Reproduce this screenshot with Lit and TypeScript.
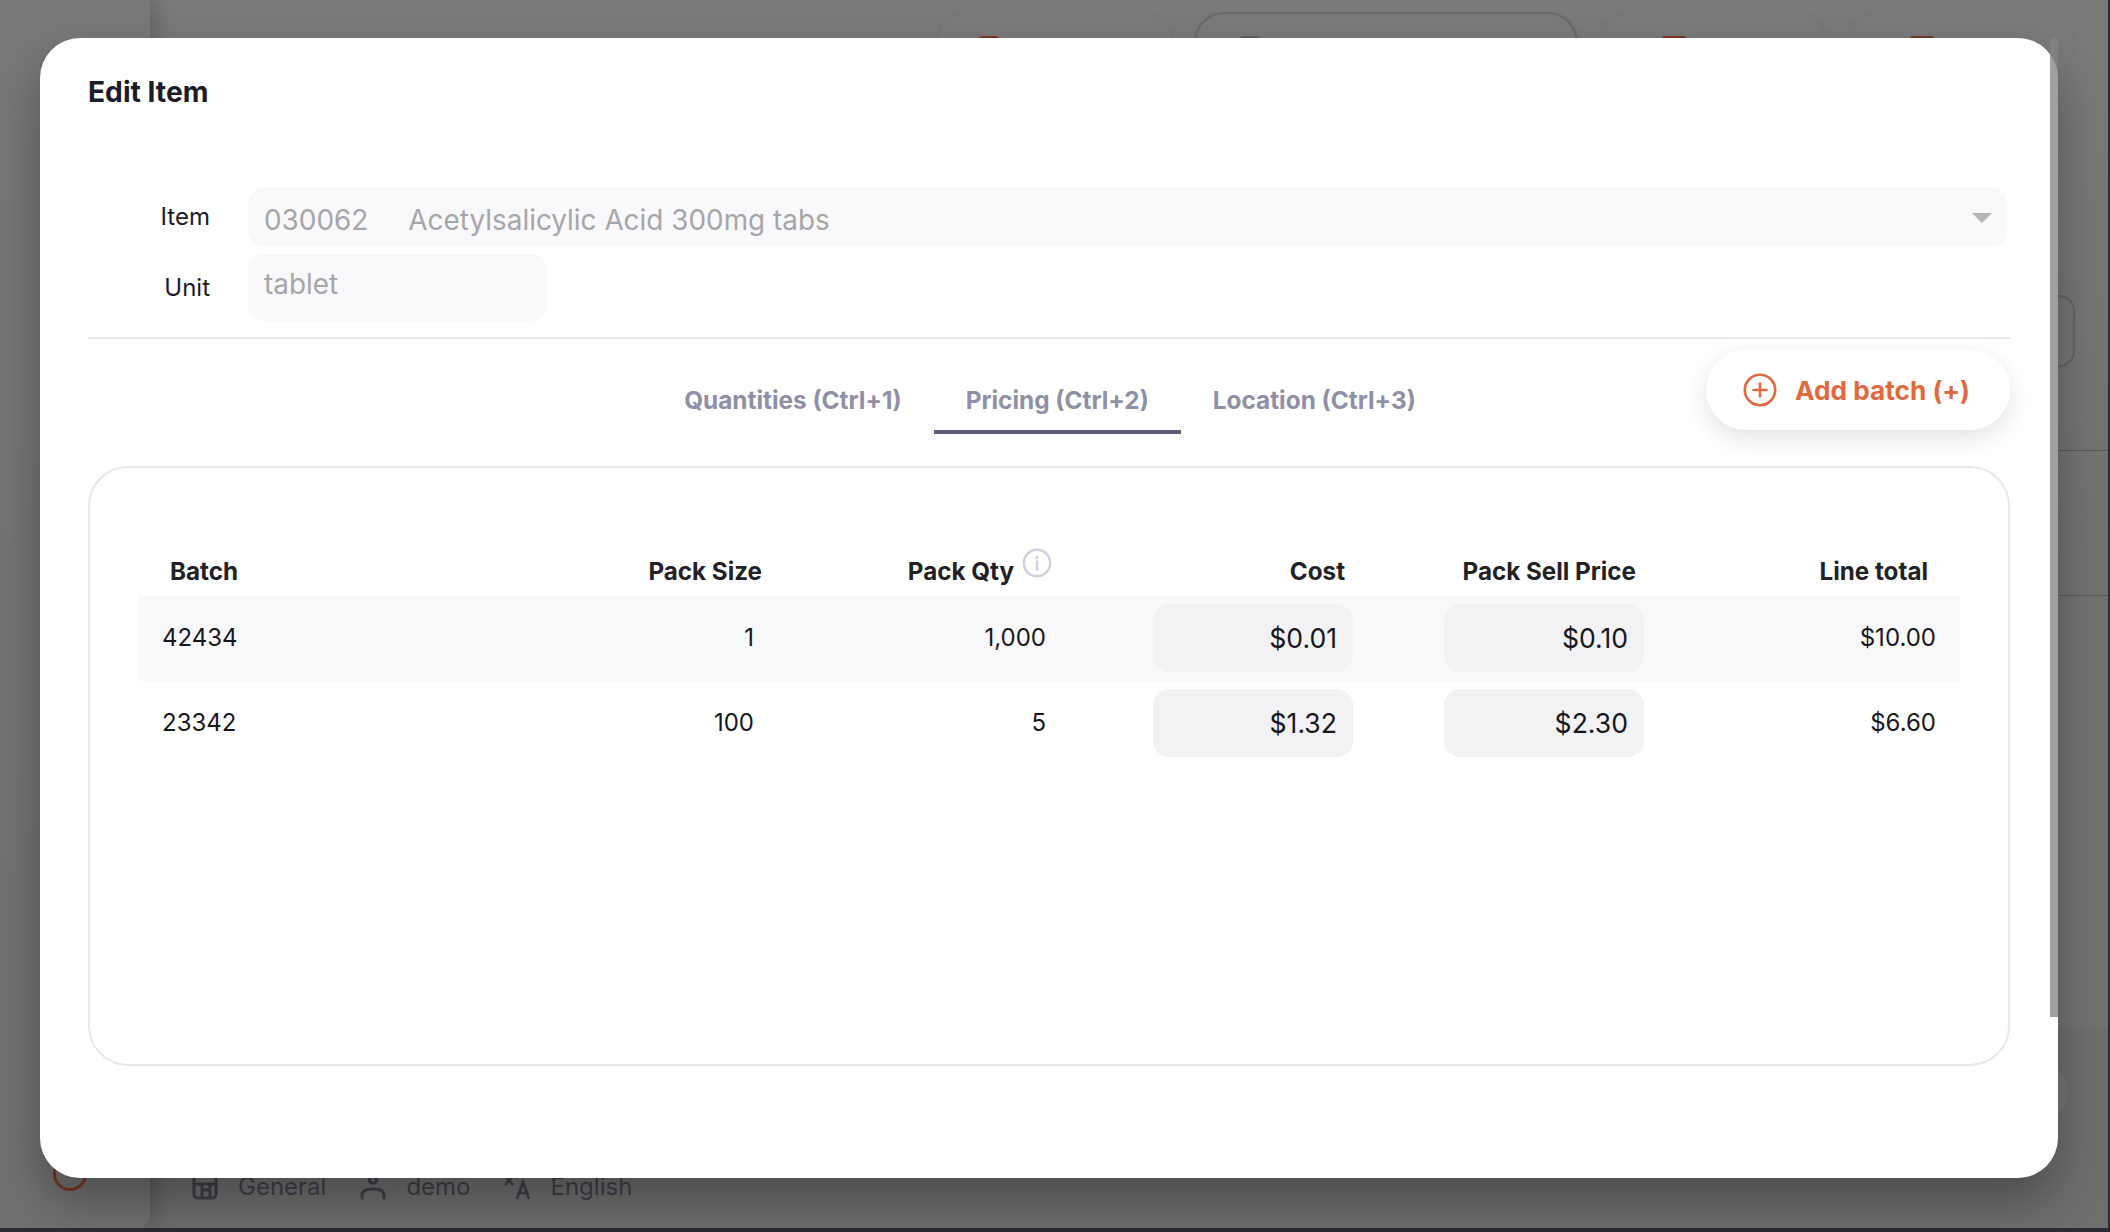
import { LitElement, html, css, svg } from "lit";
import { customElement } from "lit/decorators.js";

const plusIcon = svg`<circle cx="17" cy="17" r="15.2" fill="none" stroke="currentColor" stroke-width="2.6"/><path d="M17 10.5v13M10.5 17h13" fill="none" stroke="currentColor" stroke-width="2.6" stroke-linecap="round"/>`;
const infoIcon = svg`<circle cx="15" cy="15" r="13.2" fill="none" stroke="currentColor" stroke-width="2.4"/><circle cx="15" cy="9.4" r="1.6" fill="currentColor"/><path d="M15 13.5v8" fill="none" stroke="currentColor" stroke-width="2.4" stroke-linecap="round"/>`;

interface Row { batch: string; size: string; qty: string; cost: string; sell: string; total: string; }
const rows: Row[] = [
  { batch: "42434", size: "1", qty: "1,000", cost: "$0.01", sell: "$0.10", total: "$10.00" },
  { batch: "23342", size: "100", qty: "5", cost: "$1.32", sell: "$2.30", total: "$6.60" },
];

@customElement("app-root")
export class AppRoot extends LitElement {
  static styles = css`
    :host { display: block; position: relative; width: 2110px; height: 1232px; overflow: hidden;
      background: #2c2c34; font-family: Inter, "Noto Sans", sans-serif; }
    .page { width: 2108px; height: 1228px; position: relative; overflow: hidden;
      background: linear-gradient(180deg, #7a7a7a 0%, #727272 45%, #727272 100%); display: flex; }
    .side { width: 150px; height: 1228px; flex: none; background: linear-gradient(180deg,#787878,#707070);
      border-radius: 0 0 14px 0; box-shadow: 4px 0 22px rgba(0,0,0,.22); position: relative; z-index: 1; }
    .ring { position: absolute; left: 53px; top: 1157px; width: 34px; height: 34px; border-radius: 50%;
      border: 3px solid #7c3620; box-sizing: border-box; }
    .main { flex: 1; display: flex; flex-direction: column; position: relative; }
    .toolbar { display: flex; justify-content: flex-end; gap: 22px; padding: 12px 34px 0 0; height: 60px; flex: none; box-sizing: content-box; }
    .pill { width: 226px; height: 62px; border-radius: 42px; background: #7a7a7a; box-shadow: 0 0 3px rgba(0,0,0,.08); position: relative; }
    .pill.first { width: 235px; }
    .pill.wide { width: 384px; border: 2px solid #6a6a6a; box-sizing: border-box; }
    .pill i { position: absolute; left: 62px; top: 24px; width: 24px; height: 6px; border-radius: 2px 2px 0 0; background: #7c3620; }
    .pill.first i { left: 40px; border-radius: 12px 12px 0 0; }
    .pill.wide i { left: 42px; top: 22px; background: #5e5e5e; border-radius: 12px 12px 0 0; }
    .box { position: absolute; right: 33px; top: 295px; width: 120px; height: 72px; border: 2px solid #636363; border-radius: 16px; box-sizing: border-box; }
    .hline { position: absolute; left: 0; right: 0; height: 1px; background: #585858; }
    .hline.a { top: 450px; }
    .hline.b { top: 595px; }
    .lower { position: absolute; left: 0; right: 0; top: 1027px; bottom: 0; background: #6e6e6e; }
    .foot { position: absolute; left: 40px; top: 1170px; display: flex; align-items: center; gap: 32px;
      color: #3e3e49; font-size: 24px; line-height: 34px; }
    .foot span { display: flex; align-items: center; gap: 18px; }
    .foot svg { width: 30px; height: 30px; flex: none; }
    .blob { position: absolute; width: 60px; height: 60px; border-radius: 50%; background: #757575; }
    .blob.r { right: 40px; top: 1062px; }
    .blob.l { left: 30px; top: 383px; z-index: 1; }

    .modal { position: absolute; z-index: 2; left: 40px; top: 38px; width: 2018px; height: 1140px; box-sizing: border-box;
      background: #fff; border-radius: 40px; padding: 0 48px; box-shadow: 0 24px 48px rgba(0,0,0,.3);
      display: flex; flex-direction: column; }
    .scroll { position: absolute; right: 0; top: 0; width: 8px; height: 979px; background: rgba(130,130,130,.76); }
    h2 { margin: 0; padding-top: 38px; height: 149px; box-sizing: border-box; font-size: 28.2px; line-height: 32px; font-weight: 700; color: #1c1c28; }
    .form { display: grid; grid-template-columns: 122px 1fr; column-gap: 38px; row-gap: 6px; padding-right: 3px; }
    .label { font-size: 24px; color: #1c1c28; text-align: right; }
    .label.item { line-height: 60px; }
    .label.unit { line-height: 69px; }
    .field { background: #f9f9fb; border-radius: 16px; color: #a6a6a8; font-size: 27.9px; padding: 0 16px; box-sizing: border-box; }
    .field.item { height: 60px; display: flex; align-items: center; gap: 40px; padding-top: 5px; position: relative; }
    .field.unit { width: 299px; height: 68px; line-height: 62px; }
    .caret { position: absolute; right: 15px; top: 26px; width: 0; height: 0;
      border-left: 10px solid transparent; border-right: 10px solid transparent; border-top: 10px solid #b5b5b5; }
    .divider { height: 2px; background: #e8e8e8; margin-top: 15px; flex: none; }
    .tabsrow { display: grid; grid-template-columns: 1fr auto 1fr; margin-top: 10px; padding-left: 2px; flex: none; }
    .tabs { grid-column: 2; display: flex; height: 85px; }
    .tab { padding: 15px 32px 0; font-size: 24.35px; font-weight: 700; color: #8f8fa6; line-height: 72px; box-sizing: border-box; height: 85px; }
    .tab.on { border-bottom: 4px solid #5d5d7a; }
    .add { grid-column: 3; justify-self: end; margin-top: 1px; height: 80px; width: 304px; box-sizing: border-box; border-radius: 40px; background: #fff;
      box-shadow: 0 8px 22px rgba(40,40,70,.13); color: #df6a40; display: flex; align-items: center; gap: 18px; padding-left: 37px;
      font-size: 26.2px; font-weight: 700; }
    .add svg { width: 34px; height: 34px; flex: none; }
    .card { margin-top: 32px; height: 600px; box-sizing: border-box; border: 2px solid #e8e8e8; border-radius: 40px; padding: 0 48px; flex: none; }
    .grid { display: grid; grid-template-columns: 362px 270px 292px 291px 291px 316px; }
    .head { height: 128px; align-items: end; }
    .th { font-size: 24.2px; font-weight: 700; color: #222226; line-height: 34px; padding-bottom: 7px; display: flex; justify-content: flex-end; align-items: flex-end; position: relative; }
    .th.batch { justify-content: flex-start; padding-left: 32px; }
    .th.size { padding-right: 8px; }
    .th.qty { padding-right: 48px; }
    .th.cost { padding-right: 8px; }
    .th.sell { padding-right: 8px; }
    .th.total { padding-right: 32px; }
    .th svg { position: absolute; right: 10px; bottom: 18px; width: 30px; height: 30px; color: #cfcfe2; }
    .row { height: 85px; box-sizing: border-box; padding-bottom: 2px; align-items: center; }
    .row.alt { background: #f9f9fb; }
    .td { font-size: 24px; color: #17171c; text-align: right; padding-right: 16px; }
    .td.batch { text-align: left; padding-left: 24px; padding-right: 0; }
    .td.total { padding-right: 24px; }
    .td.input { padding-right: 0; display: flex; justify-content: flex-end; }
    .inp { width: 200px; height: 68px; background: #f2f2f4; border-radius: 16px; box-sizing: border-box; padding: 0 16px 0 0;
      font-size: 26.6px; line-height: 68px; color: #17171c; text-align: right; }
  `;

  render() {
    return html`
      <div class="page">
        <div class="side"><div class="ring"></div></div>
        <div class="main">
          <div class="lower"></div>
          <div class="toolbar">
            <div class="pill first"><i></i></div>
            <div class="pill wide"><i></i></div>
            <div class="pill"><i></i></div>
            <div class="pill"><i></i></div>
          </div>
          <div class="box"></div>
          <div class="hline a"></div>
          <div class="hline b"></div>
          <div class="blob r"></div>
          <div class="foot">
            <span>
              <svg viewBox="0 0 30 30" fill="none" stroke="currentColor" stroke-width="3" stroke-linejoin="round"><path d="M4 4v18a4 4 0 0 0 4 4h14a4 4 0 0 0 4-4V4M4 12h22M12 12v14M12 18h8M20 12v14"/></svg>
              General
            </span>
            <span>
              <svg viewBox="0 0 30 30" fill="none" stroke="currentColor" stroke-width="3" stroke-linecap="round"><circle cx="15" cy="8" r="3.5"/><path d="M4 26v-3c0-4 4-6 11-6s11 2 11 6v3"/></svg>
              demo
            </span>
            <span>
              <svg viewBox="0 0 30 30" fill="none" stroke="currentColor" stroke-width="2.6"><path d="M2 4l8 9M10 4l-8 9M14 27l6-17 6 17M16 21h8"/></svg>
              English
            </span>
          </div>
        </div>
        <div class="blob l"></div>
      </div>
      <div class="modal">
        <div class="scroll"></div>
        <h2>Edit Item</h2>
        <div class="form">
          <div class="label item">Item</div>
          <div class="field item"><span>030062</span><span>Acetylsalicylic Acid 300mg tabs</span><div class="caret"></div></div>
          <div class="label unit">Unit</div>
          <div class="field unit">tablet</div>
        </div>
        <div class="divider"></div>
        <div class="tabsrow">
          <div class="tabs">
            <div class="tab">Quantities (Ctrl+1)</div>
            <div class="tab on">Pricing (Ctrl+2)</div>
            <div class="tab">Location (Ctrl+3)</div>
          </div>
          <div class="add"><svg viewBox="0 0 34 34">${plusIcon}</svg>Add batch (+)</div>
        </div>
        <div class="card">
          <div class="grid head">
            <div class="th batch">Batch</div>
            <div class="th size">Pack Size</div>
            <div class="th qty">Pack Qty<svg viewBox="0 0 30 30">${infoIcon}</svg></div>
            <div class="th cost">Cost</div>
            <div class="th sell">Pack Sell Price</div>
            <div class="th total">Line total</div>
          </div>
          ${rows.map((r, i) => html`
            <div class="grid row ${i === 0 ? "alt" : ""}">
              <div class="td batch">${r.batch}</div>
              <div class="td">${r.size}</div>
              <div class="td">${r.qty}</div>
              <div class="td input"><div class="inp">${r.cost}</div></div>
              <div class="td input"><div class="inp">${r.sell}</div></div>
              <div class="td total">${r.total}</div>
            </div>`)}
        </div>
      </div>
    `;
  }
}
